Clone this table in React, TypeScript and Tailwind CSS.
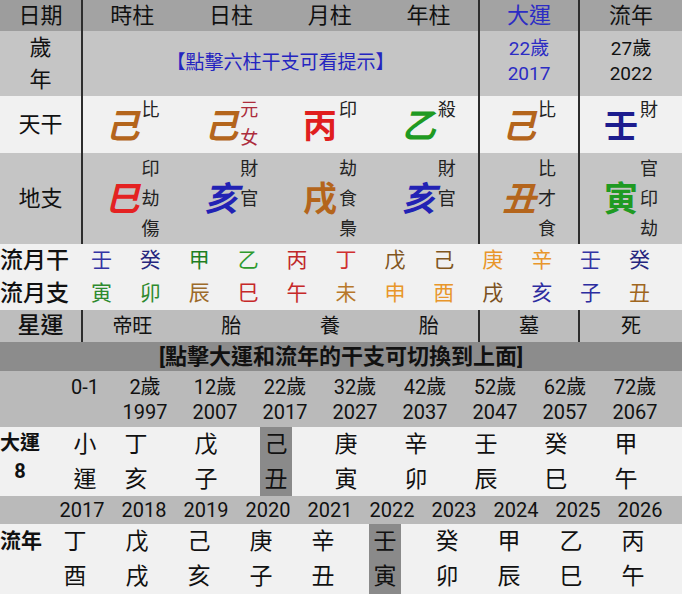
import React from "react";

type Pillar = { ch: string; color: string; tags: string[]; tagColor?: string; slant?: boolean };

const LINE = "border-r-2 border-[#2d2d2d]";
const EARTH = "text-[#b4651c]";

const stems: Pillar[] = [
  { ch: "己", color: EARTH, tags: ["比"], slant: true },
  { ch: "己", color: EARTH, tags: ["元", "女"], tagColor: "text-[#ac2c3c]", slant: true },
  { ch: "丙", color: "text-[#e01e1e]", tags: ["印"] },
  { ch: "乙", color: "text-[#1f9a22]", tags: ["殺"], slant: true },
  { ch: "己", color: EARTH, tags: ["比"], slant: true },
  { ch: "壬", color: "text-[#1c1c8e]", tags: ["財"] },
];

const branches: Pillar[] = [
  { ch: "巳", color: "text-[#e42222]", tags: ["印", "劫", "傷"], slant: true },
  { ch: "亥", color: "text-[#2222b4]", tags: ["財", "官"], slant: true },
  { ch: "戌", color: EARTH, tags: ["劫", "食", "梟"] },
  { ch: "亥", color: "text-[#2222b4]", tags: ["財", "官"], slant: true },
  { ch: "丑", color: EARTH, tags: ["比", "才", "食"], slant: true },
  { ch: "寅", color: "text-[#1f9a22]", tags: ["官", "印", "劫"] },
];

const monthGan = [
  ["壬", "text-[#3434a4]"],
  ["癸", "text-[#26267e]"],
  ["甲", "text-[#1f7f1f]"],
  ["乙", "text-[#2e9a2e]"],
  ["丙", "text-[#c0282a]"],
  ["丁", "text-[#d03030]"],
  ["戊", "text-[#80561e]"],
  ["己", "text-[#80561e]"],
  ["庚", "text-[#e8962a]"],
  ["辛", "text-[#e8962a]"],
  ["壬", "text-[#3434a4]"],
  ["癸", "text-[#26267e]"],
];

const monthZhi = [
  ["寅", "text-[#2e8a2e]"],
  ["卯", "text-[#2e8a2e]"],
  ["辰", "text-[#9c6a2a]"],
  ["巳", "text-[#c62828]"],
  ["午", "text-[#c62828]"],
  ["未", "text-[#b8782a]"],
  ["申", "text-[#e8962a]"],
  ["酉", "text-[#e8962a]"],
  ["戌", "text-[#7a5020]"],
  ["亥", "text-[#2c2ca0]"],
  ["子", "text-[#2c2ca0]"],
  ["丑", "text-[#a0661e]"],
];

const xingyun = ["帝旺", "胎", "養", "胎"];

const dayunAges = [
  ["2歲", "1997"],
  ["12歲", "2007"],
  ["22歲", "2017"],
  ["32歲", "2027"],
  ["42歲", "2037"],
  ["52歲", "2047"],
  ["62歲", "2057"],
  ["72歲", "2067"],
];

const dayun = [
  ["丁", "亥"],
  ["戊", "子"],
  ["己", "丑"],
  ["庚", "寅"],
  ["辛", "卯"],
  ["壬", "辰"],
  ["癸", "巳"],
  ["甲", "午"],
];

const years = ["2017", "2018", "2019", "2020", "2021", "2022", "2023", "2024", "2025", "2026"];

const liunian = [
  ["丁", "酉"],
  ["戊", "戌"],
  ["己", "亥"],
  ["庚", "子"],
  ["辛", "丑"],
  ["壬", "寅"],
  ["癸", "卯"],
  ["甲", "辰"],
  ["乙", "巳"],
  ["丙", "午"],
];

function StemCell({ p }: { p: Pillar }) {
  return (
    <div className="flex-1 flex justify-center">
      <span className={`mt-[10px] text-[34px] leading-[40px] font-bold ${p.slant ? "italic" : ""} ${p.color}`}>
        {p.ch}
      </span>
      <div className={`ml-[2px] flex flex-col text-[18px] leading-[28px] ${p.tagColor ?? "text-[#222]"}`}>
        {p.tags.map((t, i) => (
          <span key={i}>{t}</span>
        ))}
      </div>
    </div>
  );
}

function BranchCell({ p }: { p: Pillar }) {
  return (
    <div className="flex-1 flex justify-center items-center">
      <span className={`text-[34px] leading-[40px] font-bold ${p.slant ? "italic" : ""} ${p.color}`}>{p.ch}</span>
      <div className="ml-[2px] self-start pt-[1px] h-full flex flex-col text-[18px] leading-[30px] text-[#222]">
        {p.tags.map((t, i) => (
          <span key={i}>{t}</span>
        ))}
      </div>
    </div>
  );
}

export default function App() {
  return (
    <div className="w-[682px] h-[594px] overflow-hidden bg-[#f1f1f1] text-[#111] font-['Roboto','Noto_Sans_CJK_TC',sans-serif]">
      {/* Header */}
      <div className="flex h-[31px] bg-[#a3a3a3] text-[22px] leading-[31px]">
        <div className={`w-[83px] ${LINE} bg-[#9d9d9d] text-center`}>日期</div>
        <div className={`w-[397px] ${LINE} flex`}>
          {["時柱", "日柱", "月柱", "年柱"].map((t) => (
            <div key={t} className="flex-1 text-center">
              {t}
            </div>
          ))}
        </div>
        <div className={`w-[100px] ${LINE} text-center text-[#2c2cc4]`}>大運</div>
        <div className="flex-1 text-center">流年</div>
      </div>

      {/* 歲年 */}
      <div className="flex h-[65px] bg-[#c5c5c5]">
        <div className={`w-[83px] ${LINE} flex flex-col items-center pt-[1px] text-[22px] leading-[32px]`}>
          <span>歲</span>
          <span>年</span>
        </div>
        <div className={`w-[397px] ${LINE} flex items-center justify-center text-[19px] text-[#2424c0]`}>
          【點擊六柱干支可看提示】
        </div>
        <div className={`w-[100px] ${LINE} flex flex-col items-center pt-[5px] text-[19px] leading-[25px] text-[#2c2cc4]`}>
          <span>22歲</span>
          <span>2017</span>
        </div>
        <div className="flex-1 flex flex-col items-center pt-[5px] text-[19px] leading-[25px]">
          <span>27歲</span>
          <span>2022</span>
        </div>
      </div>

      {/* 天干 */}
      <div className="flex h-[57px] bg-[#f1f1f1]">
        <div className={`w-[83px] ${LINE} flex items-center justify-center text-[22px]`}>天干</div>
        <div className={`w-[397px] ${LINE} flex`}>
          {stems.slice(0, 4).map((p, i) => (
            <StemCell key={i} p={p} />
          ))}
        </div>
        <div className={`w-[100px] ${LINE} flex`}>
          <StemCell p={stems[4]} />
        </div>
        <div className="flex-1 flex">
          <StemCell p={stems[5]} />
        </div>
      </div>

      {/* 地支 */}
      <div className="flex h-[91px] bg-[#c5c5c5]">
        <div className={`w-[83px] ${LINE} flex items-center justify-center text-[22px]`}>地支</div>
        <div className={`w-[397px] ${LINE} flex`}>
          {branches.slice(0, 4).map((p, i) => (
            <BranchCell key={i} p={p} />
          ))}
        </div>
        <div className={`w-[100px] ${LINE} flex`}>
          <BranchCell p={branches[4]} />
        </div>
        <div className="flex-1 flex">
          <BranchCell p={branches[5]} />
        </div>
      </div>

      {/* 流月 */}
      <div className="flex h-[33px] items-center">
        <div className="w-[77px] text-[23px] font-medium leading-[33px]">流月干</div>
        <div className="w-[587px] grid grid-cols-12 text-[21px]">
          {monthGan.map(([c, cls], i) => (
            <span key={i} className={`text-center ${cls}`}>
              {c}
            </span>
          ))}
        </div>
      </div>
      <div className="flex h-[33px] items-center">
        <div className="w-[77px] text-[23px] font-medium leading-[33px]">流月支</div>
        <div className="w-[587px] grid grid-cols-12 text-[21px]">
          {monthZhi.map(([c, cls], i) => (
            <span key={i} className={`text-center ${cls}`}>
              {c}
            </span>
          ))}
        </div>
      </div>

      {/* 星運 */}
      <div className="flex h-[32px] bg-[#bdbdbd] leading-[32px]">
        <div className={`w-[83px] ${LINE} text-center text-[23px] font-medium`}>星運</div>
        <div className={`w-[397px] ${LINE} flex text-[20px]`}>
          {xingyun.map((t, i) => (
            <div key={i} className="flex-1 text-center">
              {t}
            </div>
          ))}
        </div>
        <div className={`w-[100px] ${LINE} text-center text-[20px]`}>墓</div>
        <div className="flex-1 text-center text-[20px]">死</div>
      </div>

      {/* Banner */}
      <div className="h-[29px] bg-[#8c8c8c] text-center text-[22px] font-bold leading-[29px]">
        [點擊大運和流年的干支可切換到上面]
      </div>

      {/* 大運 ages */}
      <div className="flex h-[56px] bg-[#bababa] pt-[4px] text-[20px] leading-[25px]">
        <div className="w-[60px]" />
        <div className="w-[50px] text-center">0-1</div>
        {dayunAges.map(([a, y]) => (
          <div key={y} className="w-[70px] flex flex-col items-center">
            <span>{a}</span>
            <span>{y}</span>
          </div>
        ))}
      </div>

      {/* 大運 row */}
      <div className="flex h-[69px] text-[23px] leading-[35px]">
        <div className="w-[60px]">
          <div className="w-[40px] pt-[2px] flex flex-col items-center text-[20px] leading-[28px] font-bold">
            <span>大運</span>
            <span>8</span>
          </div>
        </div>
        <div className="w-[50px] flex flex-col items-center">
          <span>小</span>
          <span>運</span>
        </div>
        {dayun.map(([g, z], i) => (
          <div key={i} className="w-[70px] flex justify-center pr-[18px]">
            <div className={`w-[32px] flex flex-col items-center ${i === 2 ? "bg-[#8a8a8a]" : ""}`}>
              <span>{g}</span>
              <span>{z}</span>
            </div>
          </div>
        ))}
      </div>

      {/* 流年 years */}
      <div className="flex h-[28px] bg-[#bababa] text-[20px] leading-[28px]">
        <div className="w-[51px]" />
        {years.map((y) => (
          <div key={y} className="w-[62px] text-center">
            {y}
          </div>
        ))}
      </div>

      {/* 流年 row */}
      <div className="flex h-[70px] text-[23px] leading-[35px]">
        <div className="w-[51px] pt-[2px] text-[21px] leading-[30px] font-bold">流年</div>
        {liunian.map(([g, z], i) => (
          <div key={i} className="w-[62px] flex justify-center pr-[14px]">
            <div className={`w-[32px] flex flex-col items-center ${i === 5 ? "bg-[#8a8a8a]" : ""}`}>
              <span>{g}</span>
              <span>{z}</span>
            </div>
          </div>
        ))}
      </div>
    </div>
  );
}
